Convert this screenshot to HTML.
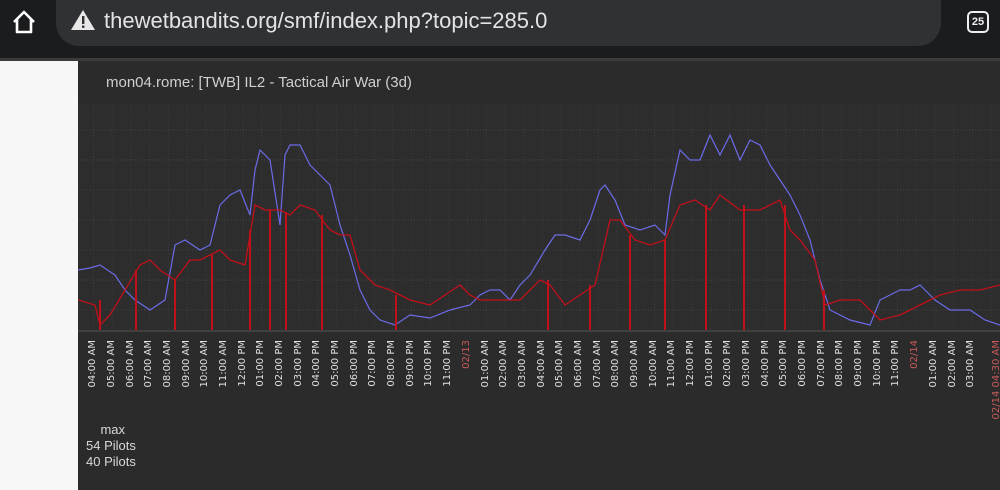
<!DOCTYPE html>
<html><head><meta charset="utf-8"><style>
html,body{margin:0;padding:0;width:1000px;height:490px;overflow:hidden;background:#2a2a2a;font-family:"Liberation Sans","DejaVu Sans",sans-serif}
.top{position:absolute;left:0;top:0;width:1000px;height:58px;background:#1b1c1e}
.pill{position:absolute;left:56px;top:0;width:885px;height:46px;background:#2f3134;border-radius:0 0 23px 23px}
.url{position:absolute;left:104px;top:8px;font-size:22px;color:#e3e3e3}
.sep{position:absolute;left:0;top:58px;width:1000px;height:3px;background:#3a3b3d}
.white{position:absolute;left:0;top:61px;width:78px;height:429px;background:#f7f7f7}
.panel{position:absolute;left:78px;top:61px;width:922px;height:429px;background:#2b2b2b}
.title{position:absolute;left:106px;top:74px;font-size:15px;color:#cfcfcf}
.lbl{position:absolute;top:340px;writing-mode:vertical-rl;transform:rotate(180deg);font-family:"DejaVu Sans",sans-serif;font-size:10px;color:#e0e0e0;white-space:nowrap;line-height:10px}
.r{color:#c65a5a}
.leg{position:absolute;left:86px;top:422px;font-size:13px;color:#d8d8d8;line-height:16px}
</style></head><body>
<div class="top"></div>
<div class="pill"></div>
<svg style="position:absolute;left:10px;top:9px" width="28" height="26" viewBox="0 0 28 26"><path d="M4 13 L14 3 L24 13 M7 10 V23 H21 V10" fill="none" stroke="#fff" stroke-width="2.6" stroke-linejoin="round"/></svg>
<svg style="position:absolute;left:70px;top:9px" width="26" height="22" viewBox="0 0 26 22"><path d="M13 1 L25 21 H1 Z" fill="#e8e8e8"/><rect x="12" y="7" width="2.4" height="8" fill="#2f3134"/><rect x="12" y="16.5" width="2.4" height="2.4" fill="#2f3134"/></svg>
<div class="url">thewetbandits.org/smf/index.php?topic=285.0</div>
<div style="position:absolute;left:967px;top:11px;width:18px;height:18px;border:2.5px solid #eee;border-radius:5px;color:#eee;font-size:11px;font-weight:bold;text-align:center;line-height:18px">25</div>
<div class="sep"></div>
<div class="white"></div>
<div class="panel"></div>
<div class="title">mon04.rome: [TWB] IL2 - Tactical Air War (3d)</div>
<svg style="position:absolute;left:78px;top:100px" width="922" height="235" viewBox="78 100 922 235">
<defs><pattern id="vg" x="93" y="0" width="18.7" height="235" patternUnits="userSpaceOnUse"><line x1="0.5" y1="0" x2="0.5" y2="235" stroke="#3c3c3c" stroke-dasharray="1,2"/></pattern></defs>
<rect x="78" y="103" width="922" height="228" fill="#2d2d2d"/>
<rect x="78" y="103" width="922" height="228" fill="url(#vg)"/>
<g stroke="#444" stroke-width="1" stroke-dasharray="1,2">
<line x1="78" y1="130" x2="1000" y2="130"/><line x1="78" y1="160" x2="1000" y2="160"/><line x1="78" y1="190" x2="1000" y2="190"/><line x1="78" y1="220" x2="1000" y2="220"/><line x1="78" y1="250" x2="1000" y2="250"/><line x1="78" y1="280" x2="1000" y2="280"/><line x1="78" y1="310" x2="1000" y2="310"/>
</g>
<line x1="78" y1="331" x2="1000" y2="331" stroke="#555"/>
<polyline fill="none" stroke="#6b6be8" stroke-width="1.2" points="78,270 90,268 100,265 115,275 125,290 135,300 150,310 165,300 175,245 185,240 200,250 210,245 220,205 230,195 240,190 250,215 255,170 260,150 270,160 280,225 285,155 290,145 300,145 310,165 320,175 330,185 340,225 350,255 360,290 370,310 380,320 395,325 410,315 430,318 450,310 470,305 480,295 490,290 500,290 510,300 520,285 530,275 545,250 555,235 565,235 580,240 590,220 600,190 605,185 615,200 625,225 640,230 655,225 665,235 670,195 680,150 690,160 700,160 710,135 720,155 730,135 740,160 750,140 760,145 770,165 780,180 790,195 800,215 810,240 820,280 830,310 850,320 870,325 880,300 890,295 900,290 910,290 920,285 935,300 950,310 970,310 985,320 1000,325"/>
<polyline fill="none" stroke="#c0101a" stroke-width="1.3" points="78,300 95,305 100,325 110,315 125,290 140,265 150,260 160,270 175,280 190,260 200,260 210,255 220,250 230,260 245,265 255,205 265,210 280,210 290,215 300,205 315,210 330,230 340,235 350,235 360,270 375,285 390,290 410,300 430,305 445,295 460,285 470,295 480,300 500,300 520,300 540,280 550,285 565,305 580,295 595,285 610,220 620,220 635,240 650,245 665,240 680,205 695,200 710,210 720,195 740,210 760,210 780,200 790,230 800,240 815,260 825,305 840,300 860,300 880,320 900,315 920,305 940,295 960,290 980,290 1000,285"/>
<g stroke="#c0101a" stroke-width="2">
<line x1="100" y1="300" x2="100" y2="330"/><line x1="136" y1="270" x2="136" y2="330"/><line x1="175" y1="280" x2="175" y2="330"/><line x1="212" y1="255" x2="212" y2="330"/><line x1="250" y1="230" x2="250" y2="330"/><line x1="270" y1="210" x2="270" y2="330"/><line x1="286" y1="212" x2="286" y2="330"/><line x1="322" y1="215" x2="322" y2="330"/><line x1="396" y1="295" x2="396" y2="330"/><line x1="548" y1="280" x2="548" y2="330"/><line x1="590" y1="285" x2="590" y2="330"/><line x1="630" y1="235" x2="630" y2="330"/><line x1="665" y1="240" x2="665" y2="330"/><line x1="706" y1="205" x2="706" y2="330"/><line x1="744" y1="205" x2="744" y2="330"/><line x1="785" y1="205" x2="785" y2="330"/><line x1="824" y1="290" x2="824" y2="330"/>
</g>
</svg>
<div class="lbl" style="left:88px">04:00 AM</div><div class="lbl" style="left:107px">05:00 AM</div><div class="lbl" style="left:126px">06:00 AM</div><div class="lbl" style="left:144px">07:00 AM</div><div class="lbl" style="left:163px">08:00 AM</div><div class="lbl" style="left:182px">09:00 AM</div><div class="lbl" style="left:200px">10:00 AM</div><div class="lbl" style="left:219px">11:00 AM</div><div class="lbl" style="left:238px">12:00 PM</div><div class="lbl" style="left:256px">01:00 PM</div><div class="lbl" style="left:275px">02:00 PM</div><div class="lbl" style="left:294px">03:00 PM</div><div class="lbl" style="left:312px">04:00 PM</div><div class="lbl" style="left:331px">05:00 PM</div><div class="lbl" style="left:350px">06:00 PM</div><div class="lbl" style="left:368px">07:00 PM</div><div class="lbl" style="left:387px">08:00 PM</div><div class="lbl" style="left:406px">09:00 PM</div><div class="lbl" style="left:424px">10:00 PM</div><div class="lbl" style="left:443px">11:00 PM</div>
<div class="lbl r" style="left:462px">02/13</div>
<div class="lbl" style="left:481px">01:00 AM</div><div class="lbl" style="left:499px">02:00 AM</div><div class="lbl" style="left:518px">03:00 AM</div><div class="lbl" style="left:537px">04:00 AM</div><div class="lbl" style="left:555px">05:00 AM</div><div class="lbl" style="left:574px">06:00 AM</div><div class="lbl" style="left:593px">07:00 AM</div><div class="lbl" style="left:611px">08:00 AM</div><div class="lbl" style="left:630px">09:00 AM</div><div class="lbl" style="left:649px">10:00 AM</div><div class="lbl" style="left:667px">11:00 AM</div><div class="lbl" style="left:686px">12:00 PM</div><div class="lbl" style="left:705px">01:00 PM</div><div class="lbl" style="left:723px">02:00 PM</div><div class="lbl" style="left:742px">03:00 PM</div><div class="lbl" style="left:761px">04:00 PM</div><div class="lbl" style="left:779px">05:00 PM</div><div class="lbl" style="left:798px">06:00 PM</div><div class="lbl" style="left:817px">07:00 PM</div><div class="lbl" style="left:835px">08:00 PM</div><div class="lbl" style="left:854px">09:00 PM</div><div class="lbl" style="left:873px">10:00 PM</div><div class="lbl" style="left:891px">11:00 PM</div>
<div class="lbl r" style="left:910px">02/14</div>
<div class="lbl" style="left:929px">01:00 AM</div><div class="lbl" style="left:948px">02:00 AM</div><div class="lbl" style="left:966px">03:00 AM</div>
<div class="lbl r" style="left:992px">02/14 04:30 AM</div>
<div class="leg">&nbsp;&nbsp;&nbsp;&nbsp;max<br>54 Pilots<br>40 Pilots</div>
</body></html>
